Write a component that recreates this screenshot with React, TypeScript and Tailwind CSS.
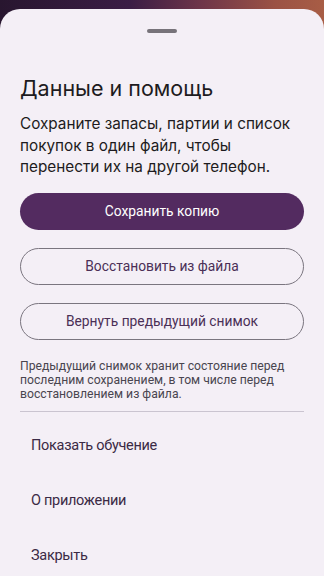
export default function App() {
  const font = { fontFamily: '"Inter", "Noto Sans", sans-serif' };
  const rob = { fontFamily: 'Roboto, "Noto Sans", sans-serif' };
  return (
    <div className="w-[324px] h-[576px] overflow-hidden bg-[#8e8b92] flex flex-col" style={font}>
      <div className="h-[30px] shrink-0 bg-[linear-gradient(90deg,#28162f_0%,#3a1d45_40%,#6e3549_62%,#9b5244_85%,#a85d45_100%)]" />
      <div className="-mt-[21px] flex-1 rounded-t-[20px] bg-[#f4eff6] px-[20px] flex flex-col">
        <div className="mx-auto mt-[20px] h-[4px] w-[30px] rounded-full bg-[#77737a]" />
        <h1 className="mt-[41px] text-[21.5px] leading-[28px] text-[#1d1b20] font-normal">Данные и помощь</h1>
        <p className="mt-[11px] text-[15.3px] leading-[21.5px] text-[#1d1b20]">
          Сохраните запасы, партии и список покупок в один файл, чтобы перенести их на другой телефон.
        </p>
        <div className="flex flex-col" style={rob}>
          <button className="mt-[15px] h-[37px] w-full rounded-full bg-[#532b60] text-white text-[13.8px] font-normal">Сохранить копию</button>
          <button className="mt-[18px] h-[37px] w-full rounded-full border border-[#7a757f] text-[#4b2f56] text-[13.8px] font-normal">Восстановить из файла</button>
          <button className="mt-[18px] h-[37px] w-full rounded-full border border-[#7a757f] text-[#4b2f56] text-[13.8px] font-normal">Вернуть предыдущий снимок</button>
          <p className="mt-[19px] text-[12.2px] leading-[14px] text-[#49454f]">
            Предыдущий снимок хранит состояние перед последним сохранением, в том числе перед восстановлением из файла.
          </p>
          <div className="mt-[10px] h-px bg-[#cac4d0]" />
          <div className="flex flex-col pt-[7px]">
            <div className="h-[55px] px-[11px] flex items-center text-[14.5px] tracking-[-0.3px] text-[#3b2a45]">Показать обучение</div>
            <div className="h-[55px] px-[11px] flex items-center text-[14.5px] tracking-[-0.3px] text-[#3b2a45]">О приложении</div>
            <div className="h-[55px] px-[11px] flex items-center text-[14.5px] tracking-[-0.3px] text-[#3b2a45]">Закрыть</div>
          </div>
        </div>
      </div>
    </div>
  );
}
